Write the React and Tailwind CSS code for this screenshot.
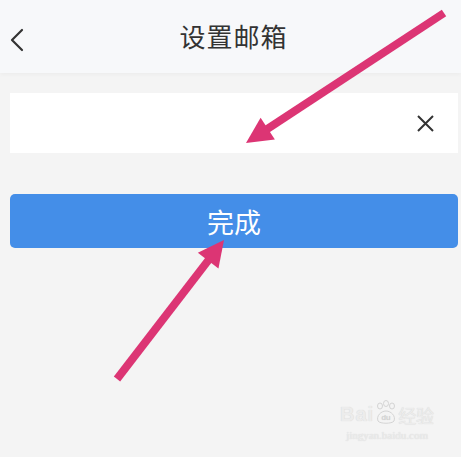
import React from 'react';

const cjk = { fontFamily: '"Noto Sans CJK SC", "Noto Sans", sans-serif' };

function Arrow({ x1, y1, x2, y2 }) {
  // shaft plus a filled triangular head at (x2, y2)
  const dx = x2 - x1;
  const dy = y2 - y1;
  const len = Math.hypot(dx, dy);
  const ux = dx / len;
  const uy = dy / len;
  const headLen = 26;
  const headW = 13;
  const bx = x2 - ux * headLen;
  const by = y2 - uy * headLen;
  const px = -uy * headW;
  const py = ux * headW;
  return (
    <g>
      <line x1={x1} y1={y1} x2={bx + ux * 4} y2={by + uy * 4} stroke="#dc3574" strokeWidth="8" />
      <polygon points={`${x2},${y2} ${bx + px},${by + py} ${bx - px},${by - py}`} fill="#dc3574" />
    </g>
  );
}

export default function App() {
  return (
    <div className="relative w-[461px] h-[457px] overflow-hidden bg-[#f4f4f4]" style={cjk}>
      <header className="relative h-[73px] bg-[#f7f8fa] flex items-center justify-center shadow-[0_2px_4px_rgba(0,0,0,0.03)]">
        <svg className="absolute left-[9px] top-[28px]" width="16" height="24" viewBox="0 0 16 24" fill="none">
          <path d="M13 2 L3 12 L13 22" stroke="#333" strokeWidth="2.2" strokeLinecap="round" strokeLinejoin="round" />
        </svg>
        <h1 className="text-[26px] text-[#333] tracking-[1px] leading-none -mt-[2px] ml-[6px]">设置邮箱</h1>
      </header>

      <div className="pl-[10px] pr-[3px] pt-[20px]">
        <div className="h-[60px] bg-white flex items-center justify-end pr-[24px]">
          <svg width="17" height="17" viewBox="0 0 17 17">
            <path d="M1 1 L16 16 M16 1 L1 16" stroke="#333" strokeWidth="2" />
          </svg>
        </div>

        <button className="mt-[41px] w-full h-[54px] rounded-[5px] bg-[#448ee8] text-white text-[27px] leading-none flex items-center justify-center">
          完成
        </button>
      </div>

      {/* watermark */}
      <div className="absolute left-[340px] top-[400px] flex flex-col items-center text-[#ececec]" style={{ textShadow: '0 0 1px #cfcfcf' }}>
        <div className="flex items-end leading-none">
          <span className="text-[20px] font-bold tracking-[1px]" style={{ fontFamily: '"Liberation Sans", sans-serif' }}>Bai</span>
          <svg width="22" height="24" viewBox="0 0 22 24" className="mx-[1px]">
            <g fill="none" stroke="#d4d4d4" strokeWidth="1">
              <ellipse cx="5" cy="6" rx="2.5" ry="3" />
              <ellipse cx="11" cy="3.5" rx="2.5" ry="3" />
              <ellipse cx="17" cy="6" rx="2.5" ry="3" />
              <path d="M3 21 C1 16 6 11 11 11 C16 11 21 16 19 21 C17 24 5 24 3 21 Z" />
            </g>
            <text x="11" y="20" fontSize="8" fill="#d0d0d0" textAnchor="middle" fontFamily="Liberation Sans, sans-serif">du</text>
          </svg>
          <span className="text-[18px]">经验</span>
        </div>
        <div className="text-[11px] mt-[3px]" style={{ fontFamily: '"Liberation Serif", serif' }}>jingyan.baidu.com</div>
      </div>

      <svg className="absolute inset-0 pointer-events-none" width="461" height="457">
        <Arrow x1={444} y1={13} x2={246} y2={143} />
        <Arrow x1={117} y1={379} x2={224} y2={240} />
      </svg>
    </div>
  );
}
